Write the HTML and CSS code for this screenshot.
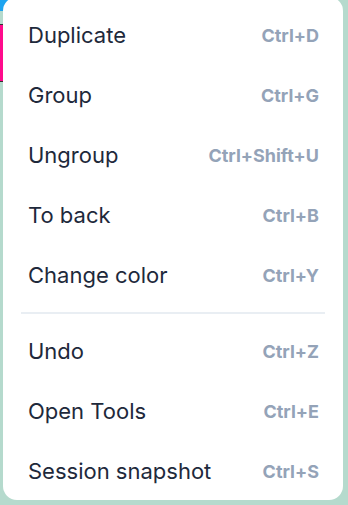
FILE: index.html
```html
<!DOCTYPE html>
<html>
<head>
<meta charset="utf-8">
<link rel="stylesheet" href="styles.css">
</head>
<body>
<div class="canvas">
  <div class="shape-blue"></div>
  <div class="shape-pink"></div>
  <div class="menu">
    <div class="item"><span class="label">Duplicate</span><span class="key">Ctrl+D</span></div>
    <div class="item"><span class="label">Group</span><span class="key">Ctrl+G</span></div>
    <div class="item"><span class="label">Ungroup</span><span class="key">Ctrl+Shift+U</span></div>
    <div class="item"><span class="label">To back</span><span class="key">Ctrl+B</span></div>
    <div class="item"><span class="label">Change color</span><span class="key">Ctrl+Y</span></div>
    <div class="sep"></div>
    <div class="item"><span class="label">Undo</span><span class="key">Ctrl+Z</span></div>
    <div class="item"><span class="label">Open Tools</span><span class="key">Ctrl+E</span></div>
    <div class="item"><span class="label">Session snapshot</span><span class="key">Ctrl+S</span></div>
  </div>
</div>
</body>
</html>
```
FILE: styles.css
```css
html, body {
  margin: 0;
  padding: 0;
  background: #b5dacd;
  width: 348px;
  height: 505px;
  overflow: hidden;
  font-family: Inter, "Noto Sans", sans-serif;
}
.canvas {
  position: relative;
  width: 348px;
  height: 505px;
}
.shape-blue {
  position: absolute;
  left: 0;
  top: 0;
  width: 14px;
  height: 14px;
  background: #1ea4f0;
}
.shape-pink {
  position: absolute;
  left: 0;
  top: 27px;
  width: 3px;
  height: 56px;
  background: #ff0a8c;
  border-top: 1px solid #333;
  border-bottom: 1px solid #333;
}
.menu {
  position: relative;
  margin-left: 3px;
  margin-top: -3px;
  width: 340px;
  height: 503px;
  box-sizing: border-box;
  background: #ffffff;
  border-radius: 14px;
  padding: 8px 18px 0 18px;
}
.item {
  display: flex;
  align-items: center;
  justify-content: space-between;
  height: 60px;
  padding: 0 6px 0 7px;
}
.label {
  font-size: 22px;
  color: #1e293b;
  font-weight: 400;
}
.key {
  font-size: 18px;
  font-weight: 700;
  color: #94a3b8;
}
.sep {
  height: 2px;
  background: #e9eef3;
  margin: 7px 0;
}
```
